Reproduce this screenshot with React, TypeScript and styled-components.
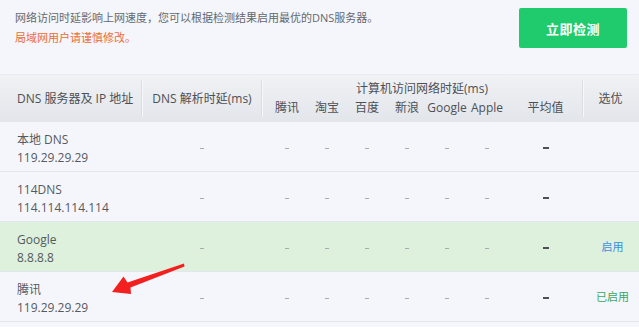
import React from "react";
import styled, { createGlobalStyle } from "styled-components";

const Global = createGlobalStyle`
  html, body { margin: 0; padding: 0; background: #f4f6fb; }
  body { font-family: "Open Sans", "Noto Sans CJK SC", sans-serif; }
  * { box-sizing: border-box; }
`;

const Page = styled.div`
  position: relative;
  width: 639px;
  height: 327px;
  overflow: hidden;
  background: #f4f6fb;
  font-family: "Open Sans", "Noto Sans CJK SC", sans-serif;
`;

const TopBar = styled.div`
  height: 75px;
  display: flex;
  justify-content: space-between;
  align-items: flex-start;
  padding: 8px 12px 0 15px;
  border-bottom: 1px solid #e9ebf0;
`;

const Notice = styled.div`
  display: flex;
  flex-direction: column;
  font-size: 11px;
  line-height: 20px;
`;

const NoticeLine = styled.div<{ $warn?: boolean }>`
  color: ${(p) => (p.$warn ? "#ee6b34" : "#64686e")};
  white-space: nowrap;
`;

const CheckButton = styled.button`
  width: 108px;
  height: 40px;
  border: none;
  border-radius: 2px;
  background: #1fcb6c;
  color: #fff;
  font-family: "Noto Sans CJK SC", sans-serif;
  font-size: 13px;
  font-weight: 700;
  letter-spacing: 0.5px;
  cursor: pointer;
`;

const COLS = "142px 120px 45px repeat(5, 40px) 75px 1fr";

const Header = styled.div`
  display: grid;
  grid-template-columns: ${COLS};
  grid-template-rows: 22px 25px;
  height: 47px;
  background: linear-gradient(#f0f2f5, #e2e5ea);
  color: #4d5055;
  font-size: 12px;
`;

const HeadCell = styled.div<{ $col: string; $row: string; $left?: boolean; $divider?: "left" | "right" }>`
  position: relative;
  grid-column: ${(p) => p.$col};
  grid-row: ${(p) => p.$row};
  display: flex;
  align-items: center;
  justify-content: ${(p) => (p.$left ? "flex-start" : "center")};
  padding-left: ${(p) => (p.$left ? "17px" : "0")};
  white-space: nowrap;
  line-height: 16px;
  &::after {
    content: "";
    display: ${(p) => (p.$divider ? "block" : "none")};
    position: absolute;
    top: 5px;
    bottom: 5px;
    ${(p) => (p.$divider === "left" ? "left: 0;" : "right: 0;")}
    width: 1px;
    background: #dadde3;
    box-shadow: 1px 0 0 #f7f8fa;
  }
`;

const GroupTitle = styled(HeadCell)`
  align-items: flex-end;
`;

const SubHead = styled(HeadCell)<{ $shift?: number }>`
  align-items: flex-start;
  padding-top: 3px;
  padding-left: ${(p) => p.$shift ?? 0}px;
`;

const Row = styled.div<{ $active?: boolean }>`
  display: grid;
  grid-template-columns: ${COLS};
  height: 50px;
  background: ${(p) => (p.$active ? "#ddf1dd" : "#f5f6fc")};
  border-bottom: 1px solid #e4e6ed;
  color: #555a60;
  font-size: 12px;
`;

const NameCell = styled.div`
  display: flex;
  flex-direction: column;
  padding: 9px 0 0 17px;
  line-height: 18px;
  white-space: nowrap;
`;

const Cell = styled.div<{ $shift?: number }>`
  display: flex;
  align-items: center;
  justify-content: center;
  padding-left: ${(p) => p.$shift ?? 0}px;
  padding-bottom: 1px;
`;

const Dash = styled.span`
  display: block;
  width: 4px;
  height: 1px;
  background: #a8abb2;
  margin-top: 4px;
`;

const BoldDash = styled.span`
  display: block;
  width: 6px;
  height: 2px;
  background: #4d5056;
  margin-top: 4px;
`;

const Action = styled.span<{ $done?: boolean }>`
  font-family: "Noto Sans CJK SC", sans-serif;
  font-size: 11px;
  color: ${(p) => (p.$done ? "#36a862" : "#3a8fe2")};
  cursor: pointer;
`;

const ArrowLayer = styled.svg`
  position: absolute;
  left: 0;
  top: 0;
  pointer-events: none;
`;

type Server = { name: string; ip: string; active?: boolean; action?: "enable" | "enabled" };

const servers: Server[] = [
  { name: "本地 DNS", ip: "119.29.29.29" },
  { name: "114DNS", ip: "114.114.114.114" },
  { name: "Google", ip: "8.8.8.8", active: true, action: "enable" },
  { name: "腾讯", ip: "119.29.29.29", action: "enabled" },
];

const targets = ["腾讯", "淘宝", "百度", "新浪", "Google", "Apple"];

export default function App() {
  return (
    <Page>
      <Global />
      <TopBar>
        <Notice>
          <NoticeLine>网络访问时延影响上网速度，您可以根据检测结果启用最优的DNS服务器。</NoticeLine>
          <NoticeLine $warn>局域网用户请谨慎修改。</NoticeLine>
        </Notice>
        <CheckButton>立即检测</CheckButton>
      </TopBar>

      <Header>
        <HeadCell $col="1" $row="1 / 3" $left $divider="right">DNS 服务器及 IP 地址</HeadCell>
        <HeadCell $col="2" $row="1 / 3" $divider="right">DNS 解析时延(ms)</HeadCell>
        <GroupTitle $col="3 / 10" $row="1">计算机访问网络时延(ms)</GroupTitle>
        {targets.map((t, i) => (
          <SubHead key={t} $col={String(3 + i)} $row="2" $shift={i === 0 ? 5 : 0}>
            {t}
          </SubHead>
        ))}
        <SubHead $col="9" $row="2" $shift={2}>平均值</SubHead>
        <HeadCell $col="10" $row="1 / 3" $divider="left">选优</HeadCell>
      </Header>

      {servers.map((s) => (
        <Row key={s.name} $active={s.active}>
          <NameCell>
            <span>{s.name}</span>
            <span>{s.ip}</span>
          </NameCell>
          <Cell><Dash /></Cell>
          {targets.map((t, i) => (
            <Cell key={t} $shift={i === 0 ? 5 : 0}><Dash /></Cell>
          ))}
          <Cell $shift={2}><BoldDash /></Cell>
          <Cell $shift={4}>
            {s.action === "enable" && <Action>启用</Action>}
            {s.action === "enabled" && <Action $done>已启用</Action>}
          </Cell>
        </Row>
      ))}

      <ArrowLayer width="639" height="327" viewBox="0 0 639 327">
        <polygon
          points="112,292 123.5,276.5 127.5,282.5 184,263.5 184.5,266.5 130.5,287.5 131,294"
          fill="#f2211f"
        />
      </ArrowLayer>
    </Page>
  );
}
